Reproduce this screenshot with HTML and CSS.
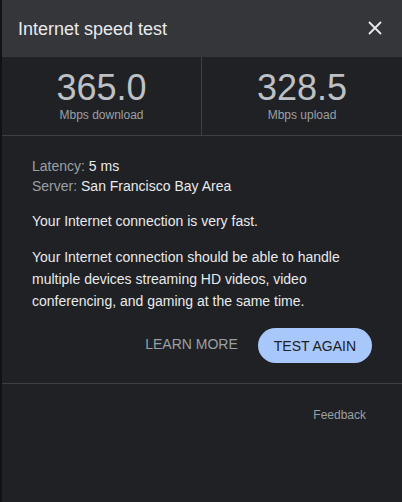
FILE: index.html
```html
<!DOCTYPE html>
<html lang="en">
<head>
    <meta charset="UTF-8">
    <meta name="viewport" content="width=device-width, initial-scale=1.0">
    <title>Internet speed test</title>
    <link rel="stylesheet" href="styles.css">
</head>
<body>
    <div class="panel">
        <div class="header">
            <h1 class="title">Internet speed test</h1>
            <button class="close" aria-label="Close">
                <svg width="14" height="14" viewBox="0 0 14 14">
                    <path d="M1 1 L13 13 M13 1 L1 13" stroke="#e8eaed" stroke-width="1.8" fill="none"/>
                </svg>
            </button>
        </div>
        <div class="stats">
            <div class="stat">
                <div class="stat-value">365.0</div>
                <div class="stat-label">Mbps download</div>
            </div>
            <div class="stat">
                <div class="stat-value">328.5</div>
                <div class="stat-label">Mbps upload</div>
            </div>
        </div>
        <div class="info">
            <div class="meta"><span class="meta-key">Latency:</span> 5 ms</div>
            <div class="meta"><span class="meta-key">Server:</span> San Francisco Bay Area</div>
            <p class="text">Your Internet connection is very fast.</p>
            <p class="text">Your Internet connection should be able to handle multiple devices streaming HD videos, video conferencing, and gaming at the same time.</p>
            <div class="actions">
                <button class="link-btn">LEARN MORE</button>
                <button class="primary-btn">TEST AGAIN</button>
            </div>
        </div>
        <div class="footer">
            <a class="feedback" href="#">Feedback</a>
        </div>
    </div>
</body>
</html>
```

FILE: styles.css
```css
body {
    margin: 0;
    background-color: #111214;
    font-family: "Liberation Sans", Arial, sans-serif;
}
.panel {
    margin-left: 2px;
    min-height: 502px;
    background-color: #202124;
    color: #e8eaed;
}
.header {
    height: 57px;
    display: flex;
    align-items: center;
    justify-content: space-between;
    padding: 0 15px 0 16px;
    background-color: #35363a;
}
.title {
    margin: 0;
    font-size: 18px;
    line-height: 24px;
    font-weight: normal;
    color: #e8eaed;
}
.close {
    width: 24px;
    height: 24px;
    padding: 0;
    border: none;
    background: none;
    display: flex;
    align-items: center;
    justify-content: center;
    margin-top: -2px;
}
.stats {
    display: grid;
    grid-template-columns: 1fr 1fr;
    border-bottom: 1px solid #3c4043;
}
.stat {
    padding: 13px 0;
    text-align: center;
}
.stat:first-child {
    border-right: 1px solid #3c4043;
}
.stat-value {
    font-size: 36px;
    line-height: 36px;
    color: #bdc1c6;
}
.stat-label {
    margin-top: 2px;
    font-size: 12px;
    line-height: 14px;
    color: #9aa0a6;
}
.info {
    padding: 20px 30px 20px 30px;
    border-bottom: 1px solid #3c4043;
    font-size: 14px;
}
.meta {
    line-height: 20px;
}
.meta-key {
    color: #9aa0a6;
}
.text {
    margin: 14px 0 0;
    line-height: 22px;
}
.actions {
    display: flex;
    justify-content: flex-end;
    align-items: center;
    gap: 20px;
    margin-top: 16px;
}
.link-btn {
    padding: 0;
    border: none;
    background: none;
    font-family: inherit;
    font-size: 14px;
    color: #9aa0a6;
    margin-top: -3px;
}
.primary-btn {
    height: 35px;
    padding: 0 16px;
    border: none;
    border-radius: 18px;
    background-color: #a8c7fa;
    font-family: inherit;
    font-size: 14px;
    color: #202124;
}
.footer {
    padding: 21px 36px 0 0;
    text-align: right;
}
.feedback {
    font-size: 12px;
    line-height: 16px;
    color: #9aa0a6;
    text-decoration: none;
}
```
